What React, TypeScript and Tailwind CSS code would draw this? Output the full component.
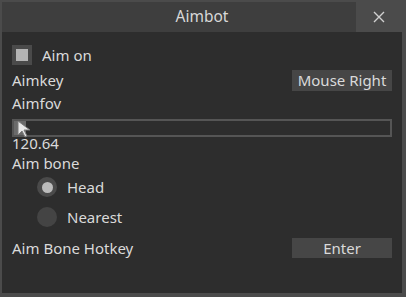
import React from "react";

export default function App() {
  const font = { fontFamily: '"Noto Sans", "DejaVu Sans", sans-serif' };
  return (
    <div className="w-[406px] h-[297px] bg-[#4b4b4b] pt-[2px] pl-[2px] pr-[4px] pb-[4px] flex flex-col text-[15px] text-[#dadada]" style={font}>
      <div className="h-[30px] flex shrink-0">
        <div className="flex-1 bg-[#3e3e3e] flex items-center justify-center pl-[46px]">
          <span className="text-[#d8d8d8] text-[15.5px]">Aimbot</span>
        </div>
        <div className="w-[46px] flex items-center justify-center">
          <svg width="12" height="12" viewBox="0 0 12 12">
            <path d="M1 1 L11 11 M11 1 L1 11" stroke="#d0d0d0" strokeWidth="1.4" />
          </svg>
        </div>
      </div>
      <div className="flex-1 bg-[#2d2d2d] flex flex-col pl-[10px] pr-[10px] leading-none">
        <div className="mt-[13px] h-[20px] flex items-center">
          <div className="w-[20px] h-[20px] bg-[#4a4a4a] flex items-center justify-center">
            <div className="w-[12px] h-[12px] bg-[#b4b4b4]" />
          </div>
          <span className="ml-[10px]">Aim on</span>
        </div>
        <div className="mt-[5px] h-[21px] flex items-center justify-between">
          <span>Aimkey</span>
          <div className="w-[100px] h-[21px] bg-[#464646] flex items-center justify-center">Mouse Right</div>
        </div>
        <div className="mt-[3px] h-[18px] flex items-center">
          <span>Aimfov</span>
        </div>
        <div className="mt-[7px] h-[18px] border-2 border-[#555555] bg-[#2d2d2d] relative">
          <div className="w-[12px] h-full bg-[#6a6a6a]" />
          <svg className="absolute left-[2px] top-[-1px]" width="18" height="18" viewBox="0 0 18 18">
            <path d="M2 1 L2 15 L6 11 L9 17 L11 16 L8 10 L14 10 Z" fill="#e8e8e8" stroke="#7a7a7a" strokeWidth="1" />
          </svg>
        </div>
        <div className="h-[13px] flex items-center">
          <span>120.64</span>
        </div>
        <div className="mt-[5px] h-[16px] flex items-center">
          <span>Aim bone</span>
        </div>
        <div className="mt-[6px] h-[20px] flex items-center pl-[25px]">
          <div className="w-[20px] h-[20px] rounded-full bg-[#4a4a4a] flex items-center justify-center">
            <div className="w-[11px] h-[11px] rounded-full bg-[#bcbcbc]" />
          </div>
          <span className="ml-[10px]">Head</span>
        </div>
        <div className="mt-[10px] h-[20px] flex items-center pl-[25px]">
          <div className="w-[20px] h-[20px] rounded-full bg-[#444444]" />
          <span className="ml-[10px]">Nearest</span>
        </div>
        <div className="mt-[11px] h-[20px] flex items-center justify-between">
          <span>Aim Bone Hotkey</span>
          <div className="w-[100px] h-[20px] bg-[#464646] flex items-center justify-center">Enter</div>
        </div>
      </div>
    </div>
  );
}
